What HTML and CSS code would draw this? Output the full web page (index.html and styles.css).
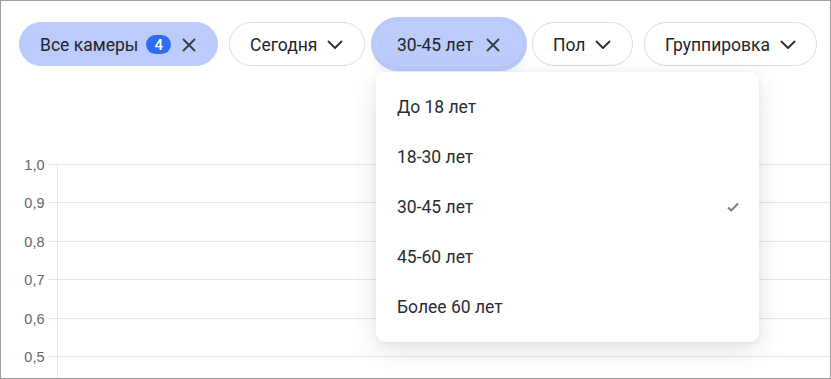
FILE: index.html
```html
<!DOCTYPE html>
<html lang="ru">
<head>
<meta charset="utf-8">
<link rel="stylesheet" href="styles.css">
</head>
<body>
<div class="frame">
  <div class="toolbar">
    <div class="chip chip-active chip-cams">
      <span class="chip-label">Все камеры</span>
      <span class="badge">4</span>
      <svg class="icon-x" width="14" height="14" viewBox="0 0 14 14"><path d="M1.5 1.5 L12.5 12.5 M12.5 1.5 L1.5 12.5" stroke="#3a3d44" stroke-width="1.9" fill="none" stroke-linecap="round"/></svg>
    </div>
    <div class="chip chip-today">
      <span class="chip-label">Сегодня</span>
      <svg class="icon-chev" width="16" height="10" viewBox="0 0 16 10"><path d="M1.5 1.5 L8 8 L14.5 1.5" stroke="#2a2d33" stroke-width="1.8" fill="none" stroke-linecap="round" stroke-linejoin="round"/></svg>
    </div>
    <div class="chip chip-active chip-open">
      <span class="chip-label">30-45 лет</span>
      <svg class="icon-x" width="14" height="14" viewBox="0 0 14 14"><path d="M1.5 1.5 L12.5 12.5 M12.5 1.5 L1.5 12.5" stroke="#3a3d44" stroke-width="1.9" fill="none" stroke-linecap="round"/></svg>
    </div>
    <div class="chip chip-sex">
      <span class="chip-label">Пол</span>
      <svg class="icon-chev" width="16" height="10" viewBox="0 0 16 10"><path d="M1.5 1.5 L8 8 L14.5 1.5" stroke="#2a2d33" stroke-width="1.8" fill="none" stroke-linecap="round" stroke-linejoin="round"/></svg>
    </div>
    <div class="chip chip-group">
      <span class="chip-label">Группировка</span>
      <svg class="icon-chev" width="16" height="10" viewBox="0 0 16 10"><path d="M1.5 1.5 L8 8 L14.5 1.5" stroke="#2a2d33" stroke-width="1.8" fill="none" stroke-linecap="round" stroke-linejoin="round"/></svg>
    </div>
  </div>

  <svg class="chart" width="829" height="238" viewBox="0 0 829 238">
    <g stroke="#e6e6e6" stroke-width="1">
      <line x1="47" y1="24.5" x2="829" y2="24.5"/>
      <line x1="47" y1="62.5" x2="829" y2="62.5"/>
      <line x1="47" y1="101.5" x2="829" y2="101.5"/>
      <line x1="47" y1="139.5" x2="829" y2="139.5"/>
      <line x1="47" y1="178.5" x2="829" y2="178.5"/>
      <line x1="47" y1="216.5" x2="829" y2="216.5"/>
      <line x1="56.5" y1="24" x2="56.5" y2="238"/>
    </g>
    <g class="axis-labels" text-anchor="end">
      <text x="43.5" y="29.5">1,0</text>
      <text x="43.5" y="67.5">0,9</text>
      <text x="43.5" y="106.5">0,8</text>
      <text x="43.5" y="144.5">0,7</text>
      <text x="43.5" y="183.5">0,6</text>
      <text x="43.5" y="221.5">0,5</text>
    </g>
  </svg>

  <div class="menu">
    <div class="menu-item">До 18 лет</div>
    <div class="menu-item">18-30 лет</div>
    <div class="menu-item menu-item-selected">
      <span>30-45 лет</span>
      <svg class="icon-check" width="12" height="10" viewBox="0 0 12 10"><path d="M1 5.5 L4.2 8.5 L11 1.5" stroke="#7b808a" stroke-width="2" fill="none" stroke-linejoin="round"/></svg>
    </div>
    <div class="menu-item">45-60 лет</div>
    <div class="menu-item">Более 60 лет</div>
  </div>
</div>
</body>
</html>
```

FILE: styles.css
```css
* { box-sizing: border-box; }

html, body {
  margin: 0;
  padding: 0;
  background: #ffffff;
}

body {
  font-family: Roboto, "Noto Sans", sans-serif;
  color: #22252b;
}

.frame {
  position: relative;
  width: 831px;
  height: 379px;
  border: 1px solid #9e9e9e;
  overflow: hidden;
  background: #fff;
}

.toolbar {
  display: flex;
  align-items: center;
  gap: 11px;
  padding: 21px 0 0 18px;
}

.chip {
  display: flex;
  align-items: center;
  height: 44px;
  border-radius: 22px;
  border: 1px solid #dcdee4;
  background: #fff;
  padding: 1px 20px 0;
  font-size: 17.5px;
  line-height: 20px;
  white-space: nowrap;
  flex: none;
}

.chip-active {
  background: #bccbfc;
  border-color: #bccbfc;
}

.chip-cams { width: 199px; }
.chip-today { width: 136px; }
.chip-open {
  width: 146px;
  border-color: #c8d4fc;
  box-shadow: 0 0 0 5px #b9c9fb, 0 6px 12px rgba(60, 80, 140, 0.10);
}
.chip-sex { width: 101px; margin-left: -1px; }
.chip-group { width: 173px; }

.chip-label {
  flex: none;
}

.badge {
  display: inline-flex;
  align-items: center;
  justify-content: center;
  width: 25px;
  height: 19px;
  border-radius: 10px;
  background: #2f6cf5;
  color: #fff;
  font-size: 15px;
  font-weight: 500;
  margin-left: 8px;
}

.icon-x {
  margin-left: 11px;
  flex: none;
}

.chip-open .icon-x {
  margin-left: 13px;
}

.icon-chev {
  margin-left: 10px;
  flex: none;
}

.chart {
  display: block;
  margin-top: 74px;
}

.axis-labels text {
  font-family: "Liberation Sans", Arial, sans-serif;
  font-size: 14.5px;
  fill: #666666;
}

.menu {
  position: absolute;
  left: 375px;
  top: 71px;
  width: 383px;
  padding: 10px 0;
  background: #fff;
  border-radius: 9px;
  box-shadow: 0 8px 28px rgba(40, 55, 100, 0.13), 0 2px 6px rgba(40, 55, 100, 0.06);
}

.menu-item {
  display: flex;
  align-items: center;
  justify-content: space-between;
  height: 50px;
  padding: 0 20px 0 21px;
  font-size: 17.5px;
  color: #2a2d33;
}
```
